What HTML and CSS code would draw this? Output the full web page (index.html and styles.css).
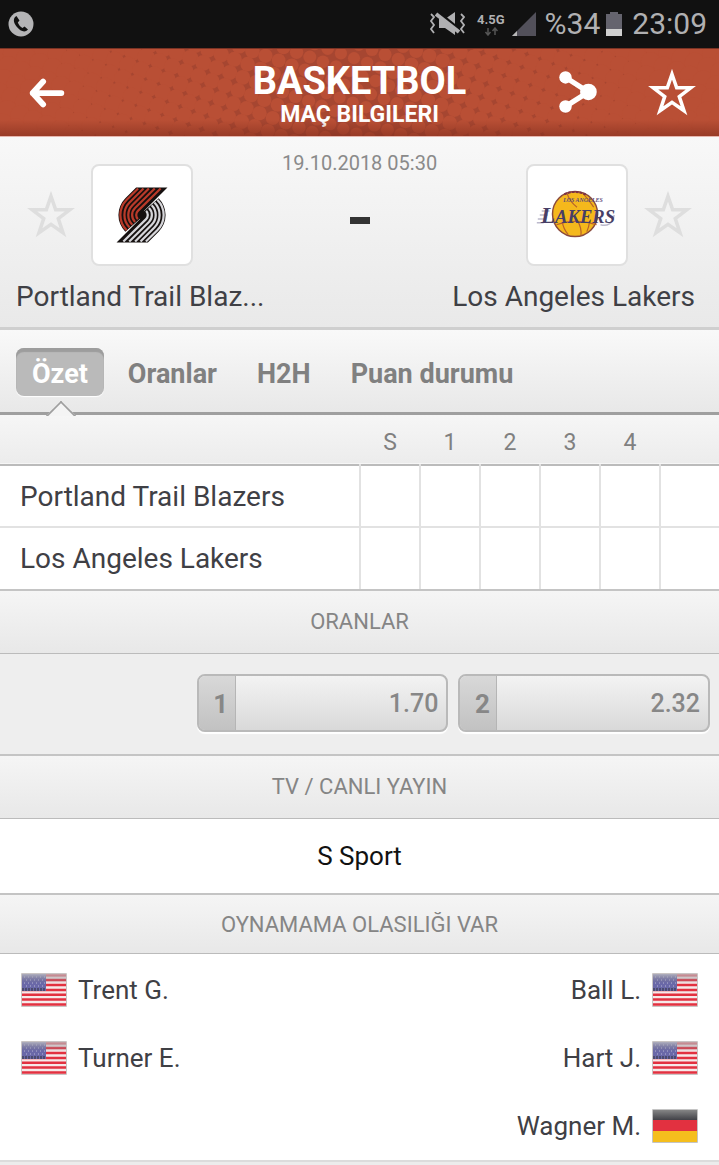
FILE: index.html
```
<!DOCTYPE html>
<html lang="tr">
<head>
  <meta charset="UTF-8" />
  <meta name="viewport" content="width=device-width, initial-scale=1.0"/>
  <title>Basketbol - Maç Bilgileri</title>
  <link rel="stylesheet" href="styles.css">
</head>
<body>
  <!-- shared shapes -->
  <svg class="defs" aria-hidden="true">
    <defs>
      <linearGradient id="fade" x1="0" y1="0" x2="0" y2="1">
        <stop offset="0" stop-color="#c2c2c4"/>
        <stop offset="0.3" stop-color="#77757f" stop-opacity="0"/>
      </linearGradient>
      <linearGradient id="coal" x1="0" y1="0" x2="0" y2="1">
        <stop offset="0" stop-color="#858585"/>
        <stop offset="1" stop-color="#414147"/>
      </linearGradient>
      <symbol id="star" viewBox="0 0 48 48">
        <path d="M24 6 L28.500 19 H42 L31 27.500 L35.500 41 L24 33 L12.500 41 L17 27.500 L6 19 H19.500 Z" fill="none" stroke="currentColor" stroke-width="3.400"/>
      </symbol>
      <symbol id="us" viewBox="0 0 46 34">
        <rect width="46" height="34" rx="1" fill="#c9c4c4"/>
        <rect x="1" y="1" width="44" height="32" fill="#f6e9e9"/>
        <path d="M1 2.200H45M1 7H45M1 12H45M1 17H45M1 21.800H45M1 26.500H45M1 31.500H45" stroke="#e23140" stroke-width="2.500"/>
        <rect x="1" y="1" width="24" height="17" fill="#6a68a8"/>
        <path d="M3 4H25M5 7H25M3 10H25M5 13H25" stroke="#b9b8d6" stroke-width="1" stroke-dasharray="1 3"/>
        <path d="M1 16.500H25" stroke="#4c4b6e" stroke-width="3" stroke-dasharray="2 1"/>
        <rect x="1" y="1" width="44" height="32" fill="url(#fade)" opacity="0.800"/>
      </symbol>
      <symbol id="de" viewBox="0 0 46 34">
        <rect width="46" height="34" rx="1" fill="#c4c4c4"/>
        <rect x="1" y="1" width="44" height="10" fill="url(#coal)"/>
        <rect x="1" y="11" width="44" height="11" fill="#e23140"/>
        <rect x="1" y="22" width="44" height="11" fill="#f5be1d"/>
      </symbol>
      <g id="blazer-half">
        <path d="M-6 -28 H26 L2 -4 L0 2 L-17 17 A24 24 0 0 1 -17 -17 Z" fill="#15100f"/>
      </g>
      <g id="blazer-lines" fill="none" stroke-width="2.300">
        <path d="M-4 -27 L-15.600 -15.600 A22 22 0 0 0 -15.600 15.600"/>
        <path d="M1.500 -27 L-12.700 -12.700 A18 18 0 0 0 -12.700 12.700"/>
        <path d="M7 -27 L-9.900 -9.900 A14 14 0 0 0 -9.900 9.900"/>
        <path d="M13 -27 L-7.100 -7.100 A10 10 0 0 0 -7.100 7.100"/>
        <path d="M19 -27 L-4.200 -4.200 A6 6 0 0 0 -4.200 4.200"/>
      </g>
    </defs>
  </svg>

  <div class="status-bar">
    <svg class="phone-icon" viewBox="0 0 26 26">
      <circle cx="13" cy="13" r="12.500" fill="#b4b4b6"/>
      <path d="M8.500 5 C5 7 5 11 8.500 15.500 C12.500 20.500 17 22 20 18.500 L16.500 15.500 L14.500 17 C12.500 16 10.500 13.500 9.800 11.500 L11.500 9.500 Z" fill="#111"/>
    </svg>
    <div class="status-right">
      <svg class="mute-icon" viewBox="0 0 36 26">
        <path d="M10 8 H16 L26 1 V24 L16 17 H10 Z" fill="#b0b0b2"/>
        <path d="M9 1 L31 19" stroke="#111" stroke-width="3"/>
        <path d="M7 3 L30 21" stroke="#b0b0b2" stroke-width="4"/>
        <path d="M2 3l3 3-3 4 3 4-3 4 3 4M32 3l3 3-3 4 3 4-3 4 3 4" fill="none" stroke="#b0b0b2" stroke-width="1.800"/>
      </svg>
      <div class="network">
        <span>4.5G</span>
        <svg viewBox="0 0 14 9"><path d="M4 1V8M1.500 5L4 8L6.500 5M11 8V1M8.500 4L11 1L13.500 4" fill="none" stroke="#555" stroke-width="1.500"/></svg>
      </div>
      <svg class="signal-icon" viewBox="0 0 26 26">
        <path d="M25 1V25H1Z" fill="#52505a"/>
        <path d="M6 20V25H1Z" fill="#b8b8b8"/>
      </svg>
      <span class="status-text">%34</span>
      <svg class="battery-icon" viewBox="0 0 18 26">
        <path d="M5 1H13V3H17V25H1V3H5Z" fill="#65646e"/>
        <path d="M1 18H17V25H1Z" fill="#d0d0d0"/>
      </svg>
      <span class="status-text clock">23:09</span>
    </div>
  </div>

  <header>
    <svg class="halftone" id="halftone" viewBox="0 0 719 88" preserveAspectRatio="xMidYMid slice" aria-hidden="true"></svg>
    <button class="icon-btn back-btn" aria-label="Geri">
      <svg viewBox="0 0 48 48"><path d="M20 12 L9 24 L20 36 M9 24 H39" fill="none" stroke="#fff" stroke-width="6" stroke-linecap="round" stroke-linejoin="round"/></svg>
    </button>
    <div class="header-title">
      <h1>BASKETBOL</h1>
      <p>MAÇ BILGILERI</p>
    </div>
    <div class="header-actions">
      <button class="icon-btn" aria-label="Paylaş">
        <svg viewBox="0 0 48 48">
          <path d="M12 9 L34 23 L12 37" fill="none" stroke="#fff" stroke-width="5"/>
          <circle cx="12" cy="9" r="6" fill="#fff"/><circle cx="12" cy="37" r="6" fill="#fff"/><circle cx="34" cy="23" r="8" fill="#fff"/>
        </svg>
      </button>
      <button class="icon-btn" aria-label="Favorilere ekle"><svg><use href="#star"/></svg></button>
    </div>
  </header>

  <main>
    <section class="match">
      <div class="team home">
        <div class="team-row">
          <button class="icon-btn fav" aria-label="Takımı favorilere ekle"><svg><use href="#star"/></svg></button>
          <div class="team-logo">
            <svg viewBox="-50 -50 100 100" role="img" aria-label="Portland Trail Blazers">
              <use href="#blazer-half"/>
              <use href="#blazer-half" transform="rotate(180)"/>
              <use href="#blazer-lines" stroke="#b93a2a"/>
              <use href="#blazer-lines" stroke="#d6d6da" transform="rotate(180)"/>
              <circle r="4" fill="#15100f"/>
            </svg>
          </div>
        </div>
        <p class="team-name">Portland Trail Blaz...</p>
      </div>
      <div class="score">
        <time class="match-date">19.10.2018 05:30</time>
        <span class="dash"></span>
      </div>
      <div class="team away">
        <div class="team-row">
          <div class="team-logo">
            <svg viewBox="0 0 100 100" role="img" aria-label="Los Angeles Lakers">
              <circle cx="48" cy="49" r="23" fill="#f5b81c" stroke="#8a4a3c" stroke-width="1.500"/>
              <path d="M40 28 Q42 36 50 42 M56 28 Q63 36 67 42 M29 60 Q48 53 70 60 M35 57 Q36 64 41 70 M50 55 Q55 63 54 71 M63 56 Q62 63 60 67" fill="none" stroke="#b8612a" stroke-width="1.200"/>
              <path d="M37 29 Q47 24 59 29" fill="none" stroke="#7c3247" stroke-width="2" stroke-dasharray="3 1"/>
              <path d="M14 46H22M12 50H20M10 54H18M9 58H16M74 60Q85 63 88 50" fill="none" stroke="#bcb9cc" stroke-width="1.500"/>
              <text class="lakers-city" x="36" y="37">LOS ANGELES</text>
              <text class="lakers-word" x="13" y="58"><tspan class="lakers-big">L</tspan>AKERS</text>
            </svg>
          </div>
          <button class="icon-btn fav" aria-label="Takımı favorilere ekle"><svg><use href="#star"/></svg></button>
        </div>
        <p class="team-name">Los Angeles Lakers</p>
      </div>
    </section>

    <nav class="tabs">
      <button class="tab active">Özet</button>
      <button class="tab">Oranlar</button>
      <button class="tab">H2H</button>
      <button class="tab">Puan durumu</button>
    </nav>

    <table class="periods">
      <thead>
        <tr><th class="name"></th><th>S</th><th>1</th><th>2</th><th>3</th><th>4</th><th class="last"></th></tr>
      </thead>
      <tbody>
        <tr><td class="name">Portland Trail Blazers</td><td></td><td></td><td></td><td></td><td></td><td></td></tr>
        <tr><td class="name">Los Angeles Lakers</td><td></td><td></td><td></td><td></td><td></td><td></td></tr>
      </tbody>
    </table>

    <h2 class="section-title">ORANLAR</h2>
    <div class="odds">
      <button class="odd"><span class="odd-key">1</span><span class="odd-value">1.70</span></button>
      <button class="odd"><span class="odd-key">2</span><span class="odd-value">2.32</span></button>
    </div>

    <h2 class="section-title">TV / CANLI YAYIN</h2>
    <p class="channel">S Sport</p>

    <h2 class="section-title short">OYNAMAMA OLASILIĞI VAR</h2>
    <div class="missing">
      <ul>
        <li><svg class="flag"><use href="#us"/></svg>Trent G.</li>
        <li><svg class="flag"><use href="#us"/></svg>Turner E.</li>
      </ul>
      <ul class="right">
        <li>Ball L.<svg class="flag"><use href="#us"/></svg></li>
        <li>Hart J.<svg class="flag"><use href="#us"/></svg></li>
        <li>Wagner M.<svg class="flag"><use href="#de"/></svg></li>
      </ul>
    </div>
  </main>
  <script src="script.js"></script>
</body>
</html>
```
FILE: styles.css
```
* { margin:0; padding:0; box-sizing:border-box; }
body { font-family:Roboto,"Liberation Sans",sans-serif; background:#ececec; color:#3f4045; }
button { background:none; border:none; font-family:inherit; cursor:pointer; }
.defs { position:absolute; width:0; height:0; }

.status-bar { background:#111; height:48px; display:flex; justify-content:space-between; align-items:center; padding:0 12px 0 8px; }
.phone-icon { width:26px; height:26px; }
.status-right { display:flex; align-items:center; color:#b0b0b2; }
.mute-icon { width:36px; height:26px; margin-right:12px; }
.network { display:flex; flex-direction:column; align-items:center; font-size:13px; line-height:14px; font-weight:bold; margin-right:6px; }
.network svg { width:14px; height:9px; }
.signal-icon { width:26px; height:26px; margin-right:8px; }
.battery-icon { width:18px; height:26px; margin:0 9px 0 5px; }
.status-text { font-size:30px; line-height:48px; }

header { background:#b94f35; height:88px; display:flex; justify-content:space-between; align-items:center; padding:0 21px; position:relative; color:white; border-top:1px solid #7c3324; }
header::after { content:""; position:absolute; left:0; right:0; bottom:0; height:16px; background:linear-gradient(rgba(120,40,25,0),rgba(120,40,25,0.5)); }
.halftone { position:absolute; left:0; top:0; width:100%; height:100%; }
.icon-btn { width:52px; height:52px; position:relative; display:flex; align-items:center; justify-content:center; color:white; }
.icon-btn svg { width:50px; height:50px; }
.back-btn svg { width:46px; height:46px; }
.header-title { position:absolute; left:0; right:0; padding-top:3px; text-align:center; }
.header-title h1 { font-size:38px; line-height:42px; font-weight:bold; }
.header-title p { font-size:23px; line-height:26px; font-weight:bold; }
.header-actions { display:flex; gap:42px; }

.match { display:flex; justify-content:space-between; height:194px; padding:27px 16px 0; background:linear-gradient(#f8f8f8,#e9e9e9); border-top:1px solid #e6b6ae; border-bottom:3px solid #cfcfcf; }
.team { flex:1 1 0; min-width:0; display:flex; flex-direction:column; gap:15px; }
.team-row { display:flex; align-items:center; gap:14px; padding:0 9px; }
.away { align-items:flex-end; }
.fav { color:#dedede; }
.team-logo { width:102px; height:102px; background:white; border:2px solid #e0e0e0; border-radius:8px; }
.team-logo svg { width:98px; height:98px; display:block; }
.lakers-city { font:italic bold 6px "Liberation Serif",serif; fill:#5b4a78; }
.lakers-word { font:italic bold 19px "Liberation Serif",serif; fill:#473e66; }
.lakers-big { font-size:24px; }
.team-name { font-size:28px; line-height:32px; white-space:nowrap; }
.away .team-name { padding-right:8px; }
.score { display:flex; flex-direction:column; align-items:center; margin-top:-13px; gap:42px; }
.match-date { font-size:20px; line-height:24px; color:#8a8a8a; }
.dash { width:20px; height:7px; background:#333; }

.tabs { display:flex; gap:8px; height:85px; padding:18px 16px 0; background:linear-gradient(#f9f9f9,#e8e8e8); border-bottom:3px solid #9f9f9f; position:relative; }
.tab { height:48px; padding:4px 16px 0; font-size:27px; font-weight:bold; color:#808080; }
.tab.active { background:#bababa; color:white; border-radius:8px; box-shadow:inset 0 4px 1px #9d9d9d,0 1px 1px white; }
/* notch under the selected tab */
.tabs::after { content:""; position:absolute; left:50px; bottom:-15px; width:20px; height:20px; background:#f4f4f4; border:2px solid #9f9f9f; border-right:none; border-bottom:none; transform:rotate(45deg); clip-path:polygon(0 0,100% 0,0 100%); }

.periods { width:100%; table-layout:fixed; border-collapse:collapse; background:white; }
.periods th { width:60px; height:50px; padding-top:6px; font-size:23px; font-weight:normal; color:#808080; }
.periods .name { width:auto; }
.periods .last { width:59px; }
.periods thead { background:linear-gradient(#f6f6f6,#ececec); border-bottom:2px solid #bbb; }
.periods td { height:62px; border-left:2px solid #e2e2e2; border-bottom:2px solid #e2e2e2; }
.periods td.name { padding-left:20px; font-size:28px; border-left:none; text-align:left; }
.periods tbody tr:last-child td { border-bottom:none; }

.section-title { height:65px; font-size:22px; line-height:62px; font-weight:normal; text-align:center; color:#858585; background:linear-gradient(#f5f5f5,#e8e8e8); border-top:2px solid #c4c4c4; border-bottom:1px solid #bbb; }
.section-title.short { height:61px; line-height:60px; }

.odds { display:flex; justify-content:flex-end; gap:10px; height:100px; padding-top:20px; background:#eee; }
.odd { width:35%; height:58px; display:flex; border:2px solid #b9b9b9; border-radius:8px; overflow:hidden; color:#878787; background:linear-gradient(#f3f3f3,#d9d9d9); box-shadow:0 2px 1px white; }
.odd:last-child { margin-right:9px; }
.odd-key { width:37px; height:100%; padding-left:8px; font-size:26px; line-height:56px; font-weight:bold; text-align:center; background:linear-gradient(#d8d8d8,#c2c2c2); border-right:1px solid #b5b5b5; }
.odd-value { flex:1; padding-right:8px; font-size:25px; line-height:56px; font-weight:500; text-align:right; }

.channel { height:74px; font-size:26px; line-height:74px; text-align:center; color:#111; background:white; }

.missing { display:flex; justify-content:space-between; padding:2px 21px 0; background:white; border-bottom:2px solid #dcdcdc; }
.missing ul { list-style:none; }
.missing li { height:68px; display:flex; align-items:center; gap:11px; font-size:26px; }
.missing .right li { justify-content:flex-end; }
.flag { width:46px; height:34px; }
```
FILE: script.js
```
// halftone texture: light discs on a darker band, growing until they merge at the sides
const halftone = document.getElementById('halftone');
const step = 14, angle = 20 * Math.PI / 180;
let discs = '<rect width="719" height="88" fill="#a64631"/>';

for (let i = -15; i < 60; i++) {
  for (let j = -60; j < 20; j++) {
    const x = step * (i * Math.cos(angle) - j * Math.sin(angle));
    const y = step * (i * Math.sin(angle) + j * Math.cos(angle));
    if (x < -20 || x > 740 || y < -20 || y > 108) continue;
    const r = 6 + Math.abs(x - 350) / 310 * 4;
    discs += `<circle cx="${x.toFixed(1)}" cy="${y.toFixed(1)}" r="${r.toFixed(1)}" fill="#b94f35"/>`;
  }
}
halftone.innerHTML = discs;
```
